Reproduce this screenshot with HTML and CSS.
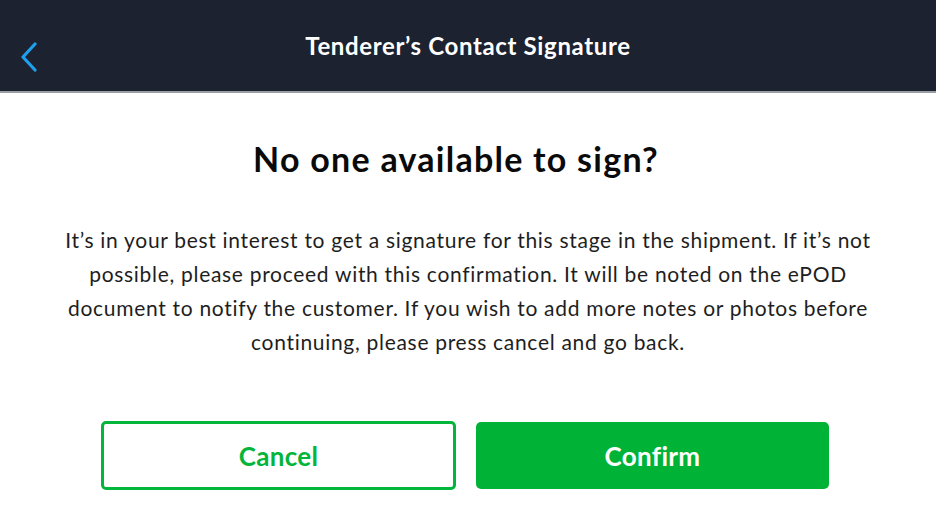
FILE: index.html
```html
<!DOCTYPE html>
<html lang="en">
<head>
<meta charset="utf-8">
<title>Tenderer's Contact Signature</title>
<link rel="stylesheet" href="styles.css">
</head>
<body>
<header class="topbar">
  <button class="back" aria-label="Back">
    <svg width="18" height="30" viewBox="0 0 18 30" aria-hidden="true"><path d="M15 2 L3 15 L15 28" fill="none" stroke="#1ea0ec" stroke-width="3.2" stroke-linecap="round" stroke-linejoin="round"/></svg>
  </button>
  <h1 class="topbar-title">Tenderer’s Contact Signature</h1>
</header>
<main class="content">
  <h2 class="heading">No one available to sign?</h2>
  <p class="message">It’s in your best interest to get a signature for this stage in the shipment. If it’s not possible, please proceed with this confirmation. It will be noted on the ePOD document to notify the customer. If you wish to add more notes or photos before continuing, please press cancel and go back.</p>
  <div class="actions">
    <button class="btn btn-cancel">Cancel</button>
    <button class="btn btn-confirm">Confirm</button>
  </div>
</main>
</body>
</html>
```

FILE: styles.css
```css
* { box-sizing: border-box; }
html, body { margin: 0; padding: 0; }
body {
  width: 936px;
  height: 524px;
  background: #ffffff;
  font-family: Lato, "Open Sans", sans-serif;
  overflow: hidden;
}
.topbar {
  height: 93px;
  background: #1c2230;
  border-bottom: 2px solid #9a9ea5;
  display: flex;
  align-items: center;
  justify-content: center;
  position: relative;
}
.back {
  position: absolute;
  left: 20px;
  top: 42px;
  padding: 0;
  border: 0;
  background: none;
  display: flex;
}
.topbar-title {
  margin: 0;
  color: #ffffff;
  font-size: 24px;
  font-weight: 700;
  letter-spacing: 0.65px;
}
.content {
  display: flex;
  flex-direction: column;
  align-items: center;
}
.heading {
  margin: 46px 24px 0 0;
  font-size: 34px;
  font-weight: 700;
  color: #0a0a0a;
  line-height: 40px;
  letter-spacing: 1.25px;
}
.message {
  margin: 44px 0 0;
  width: 830px;
  text-align: center;
  font-size: 21px;
  line-height: 34px;
  letter-spacing: 0.7px;
  color: #1e1e1e;
}
.actions {
  margin-top: 62px;
  display: flex;
  gap: 20px;
  margin-left: -6px;
}
.btn {
  width: 355px;
  height: 69px;
  border-radius: 5px;
  font-family: Lato, "Open Sans", sans-serif;
  font-size: 26px;
  font-weight: 700;
  letter-spacing: 0.3px;
  cursor: pointer;
}
.btn-cancel {
  background: #ffffff;
  border: 3px solid #03b53a;
  color: #03b53a;
}
.btn-confirm {
  background: #00b336;
  border: 0;
  color: #ffffff;
  height: 67px;
  margin-top: 1px;
  width: 353px;
}
```
